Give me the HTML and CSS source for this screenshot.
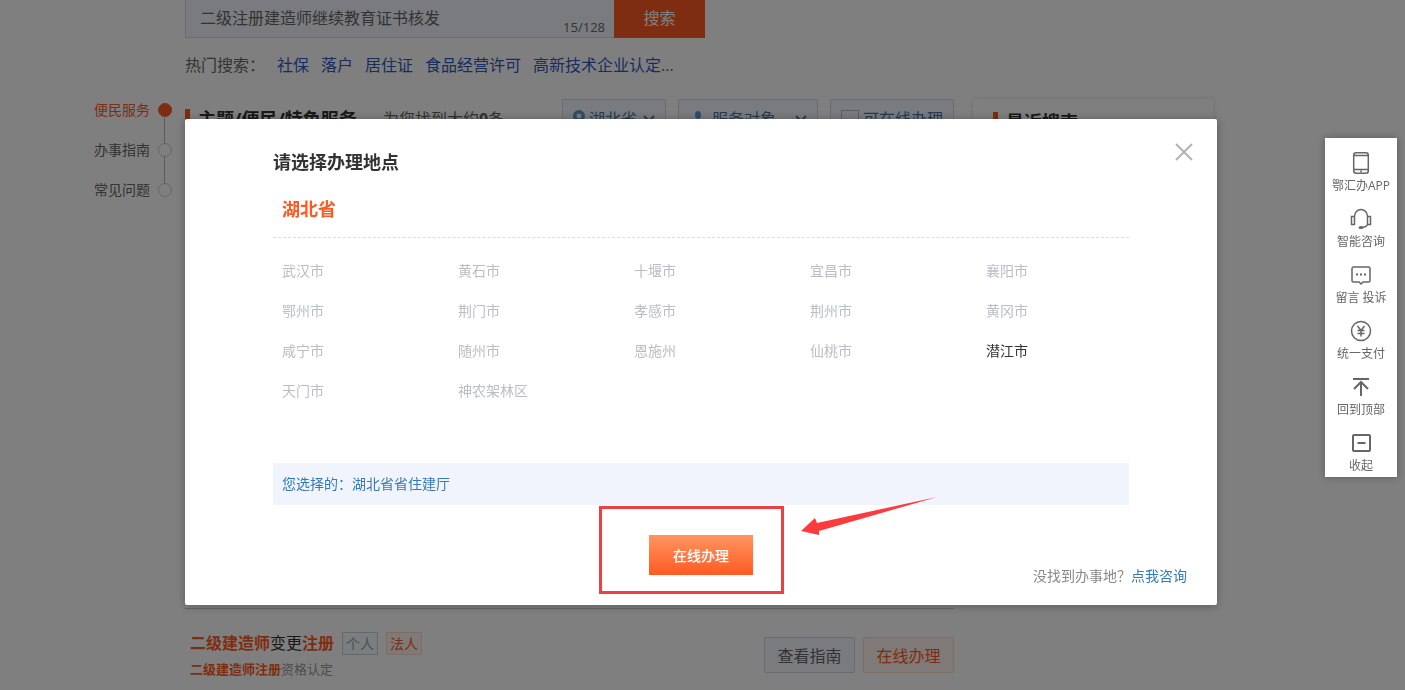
FILE: index.html
```html
<!DOCTYPE html>
<html lang="zh-CN">

<head>
  <meta charset="utf-8">
  <meta name="viewport" content="width=device-width, initial-scale=1.0">
  <title>请选择办理地点</title>
  <link rel="stylesheet" href="styles.css">
</head>

<body>
  <div class="page">
    <header class="top">
      <form class="search">
        <div class="search-box">
          <input type="text" class="search-input" aria-label="搜索" value="二级注册建造师继续教育证书核发">
          <span class="search-count">15/128</span>
        </div>
        <button type="button" class="search-btn">搜索</button>
      </form>
      <div class="hot">
        <span>热门搜索：</span>
        <a href="#">社保</a>
        <a href="#">落户</a>
        <a href="#">居住证</a>
        <a href="#">食品经营许可</a>
        <a href="#">高新技术企业认定<span class="dots">...</span></a>
      </div>
    </header>

    <nav class="side-nav">
      <a href="#" class="active">便民服务</a>
      <a href="#">办事指南</a>
      <a href="#">常见问题</a>
    </nav>

    <main class="content">
      <section class="results">
        <div class="results-head">
          <h2 class="bar-title">主题/便民/特色服务</h2>
          <p class="found">为您找到大约<b>0</b>条</p>
          <label class="filter filter-area">
            <svg width="12" height="18" viewBox="0 0 12 18">
              <path fill="#5b9bd0" fill-rule="evenodd" d="M6 0a6 6 0 0 1 6 6c0 4-6 11-6 11S0 10 0 6a6 6 0 0 1 6-6zm0 3.500a2.500 2.500 0 1 0 0 5 2.500 2.500 0 0 0 0-5z" />
            </svg>
            <select aria-label="地区">
              <option>湖北省</option>
            </select>
            <svg width="12" height="8" viewBox="0 0 12 8">
              <path fill="none" stroke="#4a78a8" stroke-width="2" d="M1 1l5 5 5-5" />
            </svg>
          </label>
          <label class="filter filter-target">
            <svg width="12" height="18" viewBox="0 0 12 18">
              <ellipse cx="6" cy="5" rx="3" ry="4" fill="#5b9bd0" />
              <path fill="#5b9bd0" d="M0 17c0-5 3-7 6-7s6 2 6 7z" />
            </svg>
            <select aria-label="服务对象">
              <option>服务对象</option>
            </select>
            <svg width="12" height="8" viewBox="0 0 12 8">
              <path fill="none" stroke="#4a78a8" stroke-width="2" d="M1 1l5 5 5-5" />
            </svg>
          </label>
          <label class="filter filter-online">
            <input type="checkbox">
            可在线办理
          </label>
        </div>

        <article class="item">
          <div class="item-text">
            <h3><em>二级建造师</em>变更<em>注册</em> <span class="tag">个人</span><span class="tag tag-legal">法人</span></h3>
            <p><em>二级建造师注册</em>资格认定</p>
          </div>
          <div class="item-btns">
            <button type="button" class="btn">查看指南</button>
            <button type="button" class="btn btn-orange">在线办理</button>
          </div>
        </article>
      </section>

      <aside class="recent">
        <h2 class="bar-title">最近搜索</h2>
      </aside>
    </main>
  </div>

  <div class="mask">
    <div class="modal" role="dialog" aria-labelledby="modal-title">
      <button type="button" class="close" aria-label="关闭">
        <svg width="20" height="20" viewBox="0 0 20 20">
          <path fill="none" stroke="#b3b3b3" stroke-width="2" d="M2 2l16 16M18 2L2 18" />
        </svg>
      </button>
      <h1 id="modal-title">请选择办理地点</h1>
      <h2 class="province">湖北省</h2>
      <ul class="cities">
        <li>武汉市</li>
        <li>黄石市</li>
        <li>十堰市</li>
        <li>宜昌市</li>
        <li>襄阳市</li>
        <li>鄂州市</li>
        <li>荆门市</li>
        <li>孝感市</li>
        <li>荆州市</li>
        <li>黄冈市</li>
        <li>咸宁市</li>
        <li>随州市</li>
        <li>恩施州</li>
        <li>仙桃市</li>
        <li><a href="#">潜江市</a></li>
        <li>天门市</li>
        <li>神农架林区</li>
      </ul>
      <p class="chosen">您选择的：湖北省省住建厅</p>
      <div class="modal-foot">
        <div class="go-wrap">
          <button type="button" class="go">在线办理</button>
          <span class="mark"></span>
          <svg class="arrow" width="138" height="42" viewBox="0 0 138 42">
            <path fill="#fb3b3e" d="M137 0L17 26l-2-5L1 34l18 4v-4z" />
          </svg>
        </div>
        <p class="help">没找到办事地？<a href="#">点我咨询</a></p>
      </div>
    </div>
  </div>

  <div class="tools">
    <a href="#">
      <svg width="24" height="24" viewBox="0 0 24 24">
        <rect x="4.700" y="1.700" width="14.600" height="20.600" rx="2.500" />
        <path d="M5 4.500h14M5 18.500h14M12 19.500v2" />
      </svg>
      鄂汇办APP
    </a>
    <a href="#">
      <svg width="24" height="24" viewBox="0 0 24 24">
        <path d="M5.500 18V9.500a6.500 7 0 0 1 13 0V18M5.500 9.500h-3v8h3M18.500 9.500h3v8h-3M18.500 17.500q-1 2.500-5 3" />
        <ellipse class="solid" cx="12" cy="20.500" rx="2.500" ry="1.500" />
      </svg>
      智能咨询
    </a>
    <a href="#">
      <svg width="24" height="24" viewBox="0 0 24 24">
        <path d="M4.500 4h15a1.500 1.500 0 0 1 1.500 1.500v12a1.500 1.500 0 0 1-1.500 1.500H14l-2 2-2-2H4.500A1.500 1.500 0 0 1 3 17.500v-12A1.500 1.500 0 0 1 4.500 4z" />
        <path class="solid" d="M7 10.500h2v2H7zM11 10.500h2v2h-2zM15 10.500h2v2h-2z" />
      </svg>
      留言 投诉
    </a>
    <a href="#">
      <svg width="24" height="24" viewBox="0 0 24 24">
        <circle cx="12" cy="12" r="9.500" />
        <path d="M8.500 7l3.500 4.500L15.500 7M8.500 11.500h7M8.500 14.500h7M12 11.500v6" />
      </svg>
      统一支付
    </a>
    <a href="#">
      <svg width="24" height="24" viewBox="0 0 24 24">
        <path stroke-width="2" d="M4 4h16M12 21V7M5 14l7-7 7 7" />
      </svg>
      回到顶部
    </a>
    <a href="#">
      <svg width="24" height="24" viewBox="0 0 24 24">
        <rect x="4" y="4" width="17" height="16" rx="1" stroke-width="2" />
        <path stroke-width="2" d="M8.500 12h8" />
      </svg>
      收起
    </a>
  </div>
</body>

</html>
```
FILE: styles.css
```css
* {
  box-sizing: border-box;
}

body {
  margin: 0;
  overflow: hidden;
  background: #fff;
  color: #333;
  font: 14px/20px 'Open Sans', 'Noto Sans CJK SC', sans-serif;
}

h1, h2, h3, p, ul {
  margin: 0;
  padding: 0;
}

a {
  text-decoration: none;
}

em {
  font-style: normal;
  font-weight: bold;
  color: #ff5a22;
}

button, input, select {
  font-family: inherit;
}

/* page under the mask */

.page {
  display: grid;
  grid-template-columns: 91px minmax(0, 1032px) 91px;
  justify-content: center;
  padding-right: 3px;
}

.top {
  grid-column: 2;
}

.search {
  display: flex;
}

.search-box {
  display: flex;
  width: 429px;
  height: 38px;
  padding: 0 9px 0 14px;
  border: 1px solid #d3d8e8;
  border-width: 0 0 1px 1px;
  background: #f4f6fe;
}

.search-input {
  flex: 1;
  min-width: 0;
  padding: 0 0 3px;
  border: 0;
  background: none;
  color: #666;
  font-size: 16px;
}

.search-count {
  align-self: flex-end;
  color: #666;
  font-size: 13px;
}

.search-btn {
  width: 91px;
  padding: 0 0 4px;
  border: 0;
  background: #ff5a22;
  color: #fff;
  font-size: 16px;
}

.hot {
  display: flex;
  gap: 12px;
  padding: 15px 0 17px;
  color: #666;
  font-size: 16px;
  line-height: 24px;
}

.hot a {
  color: #2f5bbe;
}

.hot .dots {
  color: #666;
}

.side-nav {
  grid-column: 1;
  display: flex;
  flex-direction: column;
  margin-top: -4px;
}

.side-nav a {
  position: relative;
  display: grid;
  grid-template-columns: 64px 12px;
  align-items: center;
  height: 40px;
  color: #666;
}

.side-nav a::after {
  content: '';
  width: 12px;
  height: 12px;
  border: 1px solid #ccc;
  border-radius: 50%;
}

/* line up to the previous dot */
.side-nav a + a::before {
  content: '';
  position: absolute;
  top: -14px;
  left: 70px;
  width: 1px;
  height: 28px;
  background: #bbb;
}

.side-nav .active {
  color: #ff5a22;
}

.side-nav .active::after {
  border-color: #ff5a22;
  background: #ff5a22;
}

.content {
  display: flex;
  align-items: flex-start;
  gap: 19px;
  padding: 5px 4px 0 0;
}

.results {
  flex: 1;
}

.results-head {
  display: flex;
  gap: 12px;
  height: 40px;
}

.bar-title {
  align-self: center;
  padding-left: 8px;
  border-left: 5px solid #ff5a22;
  font-size: 18px;
  line-height: 20px;
}

.found {
  flex: 1;
  align-self: center;
  padding-left: 14px;
  color: #666;
  font-size: 16px;
}

.filter {
  display: flex;
  align-items: center;
  gap: 4px;
  height: 40px;
  padding: 0 10px;
  border: 1px solid #d3d8e8;
  background: #f4f6fe;
  color: #4a78a8;
  font-size: 16px;
}

.filter-area {
  width: 104px;
}

.filter-target {
  width: 140px;
  padding-left: 13px;
}

.filter-target select {
  margin-left: 4px;
}

.filter select {
  flex: 1;
  min-width: 0;
  padding: 0;
  border: 0;
  appearance: none;
  background: none;
  color: inherit;
  font-size: 16px;
}

.filter-online input {
  width: 18px;
  height: 18px;
  margin: 0;
  border: 1px solid #bbb;
  appearance: none;
}

.recent {
  width: 240px;
  padding: 13px 20px 20px;
  box-shadow: 0 0 5px #ddd;
}

.item {
  display: flex;
  align-items: center;
  justify-content: space-between;
  margin-top: 469px;
  padding: 22px 0 8px 5px;
  border-top: 1px solid #ccc;
}

.item h3 {
  display: flex;
  align-items: center;
  font-size: 16px;
  font-weight: normal;
  line-height: 24px;
}

.tag {
  margin-left: 8px;
  padding: 0 3px;
  border: 1px solid #c0d6d6;
  background: #f6fbfc;
  color: #8aa;
  font-size: 14px;
  line-height: 21px;
}

.tag-legal {
  border-color: #ffd8c8;
  background: #fff4ee;
  color: #ff5a22;
}

.item p {
  padding-top: 4px;
  color: #999;
  font-size: 13px;
}

.item-btns {
  display: flex;
  gap: 8px;
}

.btn {
  width: 91px;
  height: 36px;
  padding: 0;
  border: 1px solid #d3d8e8;
  border-radius: 2px;
  background: #f4f6fe;
  color: #666;
  font-size: 16px;
}

.btn-orange {
  border-color: #ffd8c8;
  background: #fff4ee;
  color: #ff5a22;
}

/* dialog */

.mask {
  position: fixed;
  inset: 0;
  display: flex;
  align-items: flex-start;
  justify-content: center;
  padding: 119px 3px 0 0;
  background: rgba(0, 0, 0, .5);
}

.modal {
  position: relative;
  width: 100%;
  max-width: 1032px;
  padding: 31px 88px 0;
  border-radius: 2px;
  background: #fff;
  box-shadow: 0 1px 10px rgba(0, 0, 0, .3);
}

.close {
  position: absolute;
  top: 23px;
  right: 23px;
  display: flex;
  padding: 0;
  border: 0;
  background: none;
}

.modal h1 {
  font-size: 18px;
  line-height: 24px;
}

.province {
  padding: 23px 9px 16px;
  border-bottom: 1px dashed #ddd;
  color: #ff5a22;
  font-size: 18px;
  line-height: 24px;
}

.cities {
  display: grid;
  grid-template-columns: repeat(5, 1fr);
  margin-right: -33px;
  padding: 13px 0 52px 9px;
  color: #b9bdc5;
  line-height: 40px;
  list-style: none;
}

.cities a {
  color: #333;
}

.chosen {
  padding: 0 9px;
  background: #f1f4fd;
  color: #337ab7;
  line-height: 42px;
}

.modal-foot {
  display: grid;
  grid-template-columns: 1fr auto 1fr;
  margin-right: -58px;
  margin-left: -58px;
  padding: 30px 0 19px;
}

.go-wrap {
  grid-column: 2;
  position: relative;
}

.go {
  display: block;
  width: 104px;
  height: 40px;
  padding: 0;
  border: 0;
  background: linear-gradient(#ff9560, #ff5a22);
  color: #fff;
  font-size: 14px;
  font-weight: 500;
}

/* frame and arrow pointing at the button */
.mark {
  position: absolute;
  top: -29px;
  left: -50px;
  width: 185px;
  height: 88px;
  border: 3px solid #ee3f42;
}

.arrow {
  position: absolute;
  top: -38px;
  left: 151px;
}

.help {
  padding-top: 31px;
  color: #888;
  text-align: right;
}

.help a {
  color: #337ab7;
}

/* floating tools on the right */

.tools {
  position: fixed;
  top: 138px;
  right: 8px;
  display: flex;
  flex-direction: column;
  gap: 13px;
  width: 72px;
  padding: 13px 0 3px;
  background: #fff;
  box-shadow: 0 0 8px rgba(0, 0, 0, .3);
}

.tools a {
  display: flex;
  flex-direction: column;
  align-items: center;
  gap: 3px;
  color: #666;
  font-size: 12px;
  line-height: 16px;
  white-space: nowrap;
}

.tools svg {
  fill: none;
  stroke: #666;
  stroke-width: 1.5;
}

.tools .solid {
  fill: #666;
  stroke: none;
}
```
